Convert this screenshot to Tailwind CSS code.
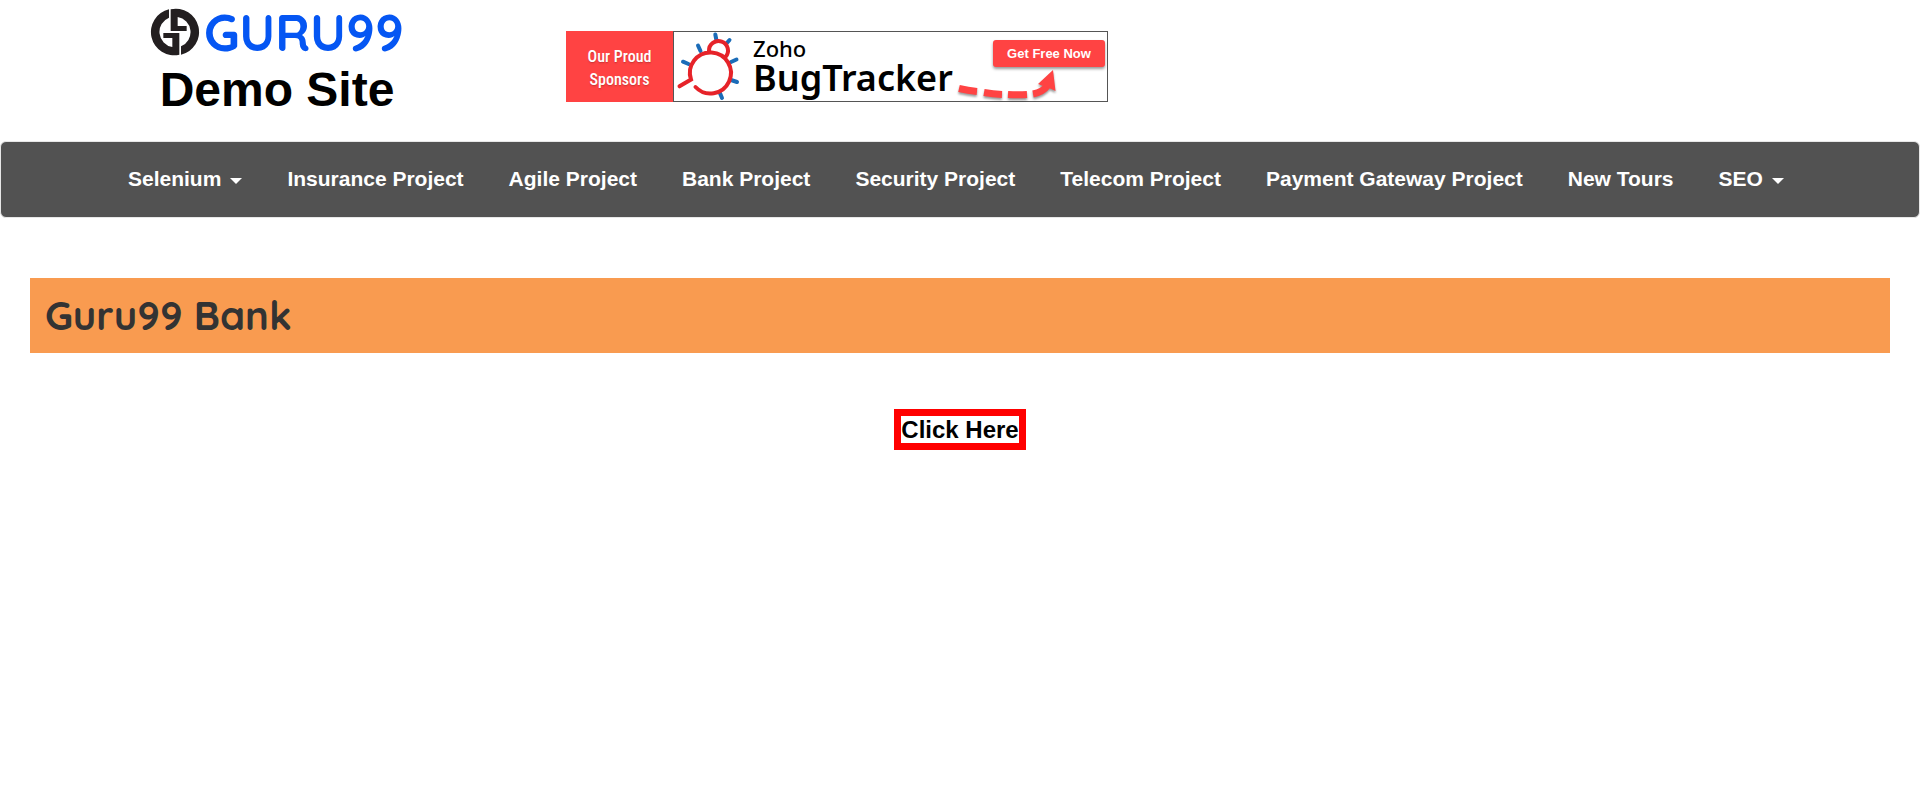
<!DOCTYPE html>
<html lang="en">
<head>
<meta charset="utf-8">
<meta name="viewport" content="width=device-width, initial-scale=1">
<title>Guru99 Bank</title>
<script src="https://cdn.jsdelivr.net/npm/@tailwindcss/browser@4"></script>
</head>
<body class="bg-white font-['Liberation_Sans',Arial,sans-serif] text-black">
<header class="flex flex-wrap items-start px-[150px] pb-[24px]">
  <div class="flex w-[254px] flex-col items-center">
    <a href="#" class="mt-[7px] flex h-[50px] w-full items-center justify-between" aria-label="Guru99 home">
      <svg class="h-[48px] w-[50px] shrink-0" viewBox="30 24 150 144" fill="#231f20" aria-hidden="true">
        <path d="M87 28A69 69 0 0 0 118 164V99H70V114H97V141A46 46 0 0 1 87 53Z"/>
        <path d="M87 28A69 69 0 0 0 118 164V99H70V114H97V141A46 46 0 0 1 87 53Z" transform="rotate(180 105 96)"/>
      </svg>
      <span class="font-['Quicksand','Lato',sans-serif] text-[51px] leading-[50px] font-bold text-[#0556f3]">GURU99</span>
    </a>
    <h2 class="mt-[5px] text-[48px] leading-[55px] font-bold whitespace-nowrap">Demo Site</h2>
  </div>
  <aside class="mt-[31px] ml-[162px] flex h-[71px] w-[542px]">
    <p class="flex w-[107px] items-center justify-center bg-[#ff4343] pt-[2px] text-center font-['Roboto_Condensed','Liberation_Sans_Narrow',sans-serif] text-[16px] leading-[23px] font-medium text-white text-shadow-sm">Our Proud<br>Sponsors</p>
    <div class="flex flex-1 border border-[#555]">
      <svg class="h-[69px] w-[70px] shrink-0" viewBox="674 32 70 69" fill="none" stroke-width="4" stroke-linecap="round" aria-hidden="true">
        <path stroke="#1b6cb8" d="M715.300 34.500L716.200 39M729.500 40L726 44M698 45.500L700.500 51M683 61.700L688.500 64M736.500 59.500L731 62M737 82L731 80M722 98L719.500 92"/>
        <path stroke="#e62329" d="M695.500 87A20.500 20.500 0 1 0 691 79.500L679.500 86.300M709 51A9.500 9.500 0 1 1 725.500 57"/>
      </svg>
      <div class="ml-[9px] flex flex-col font-['Noto_Sans',sans-serif]">
        <span class="mt-[3px] text-[22px] leading-[26px] font-medium">Zoho</span>
        <span class="text-[36px] leading-[34px] font-semibold">BugTracker</span>
      </div>
      <div class="mr-[2px] ml-auto flex w-[148px] flex-col">
        <a href="#" class="mt-[8px] flex h-[27px] w-[112px] items-center justify-center self-end rounded-[3px] bg-[#ff4343] text-[13px] font-bold text-white shadow-[0_2px_3px_#0006]">Get Free Now</a>
        <svg class="h-[34px] w-[120px] drop-shadow-[0_2px_1px_#0006]" viewBox="957 67 120 34" fill="none" stroke="#ff4343" stroke-width="7" aria-hidden="true">
          <path d="M959 88.500Q968 90.500 977 91.500M984 92.500Q993 94 1002 94.500M1008 94.500Q1018 95 1027 94.500M1033 94Q1043 92 1048 85"/>
          <path fill="#ff4343" stroke="none" d="M1053 70L1055.500 91L1049 88L1043 86L1038 84Z"/>
        </svg>
      </div>
    </div>
  </aside>
</header>

<nav class="rounded-md border border-[#e7e7e7] bg-[#525252]">
  <ul class="flex min-h-[75px] flex-wrap items-center gap-x-[45px] pb-[2px] pl-[127px] text-[21px] leading-[24px] font-bold whitespace-nowrap text-white">
    <li><a href="#" class="flex items-center gap-[9px]">Selenium <span class="mt-[4px] border-x-6 border-t-6 border-x-transparent border-t-white"></span></a></li>
    <li><a href="#">Insurance Project</a></li>
    <li><a href="#">Agile Project</a></li>
    <li><a href="#">Bank Project</a></li>
    <li><a href="#">Security Project</a></li>
    <li><a href="#">Telecom Project</a></li>
    <li><a href="#">Payment Gateway Project</a></li>
    <li><a href="#">New Tours</a></li>
    <li><a href="#" class="flex items-center gap-[9px]">SEO <span class="mt-[4px] border-x-6 border-t-6 border-x-transparent border-t-white"></span></a></li>
  </ul>
</nav>

<main class="px-[30px] pt-[60px]">
  <h1 class="bg-[#f99b50] px-[15px] pt-[12px] pb-[13px] font-['Quicksand','Lato',sans-serif] text-[40px] leading-[50px] font-bold text-[#333]">Guru99 Bank</h1>
  <div class="mt-[56px] flex justify-center">
    <a href="#" class="border-[7px] border-[#f00] text-[24px] leading-[27px] font-bold">Click Here</a>
  </div>
</main>
</body>
</html>
